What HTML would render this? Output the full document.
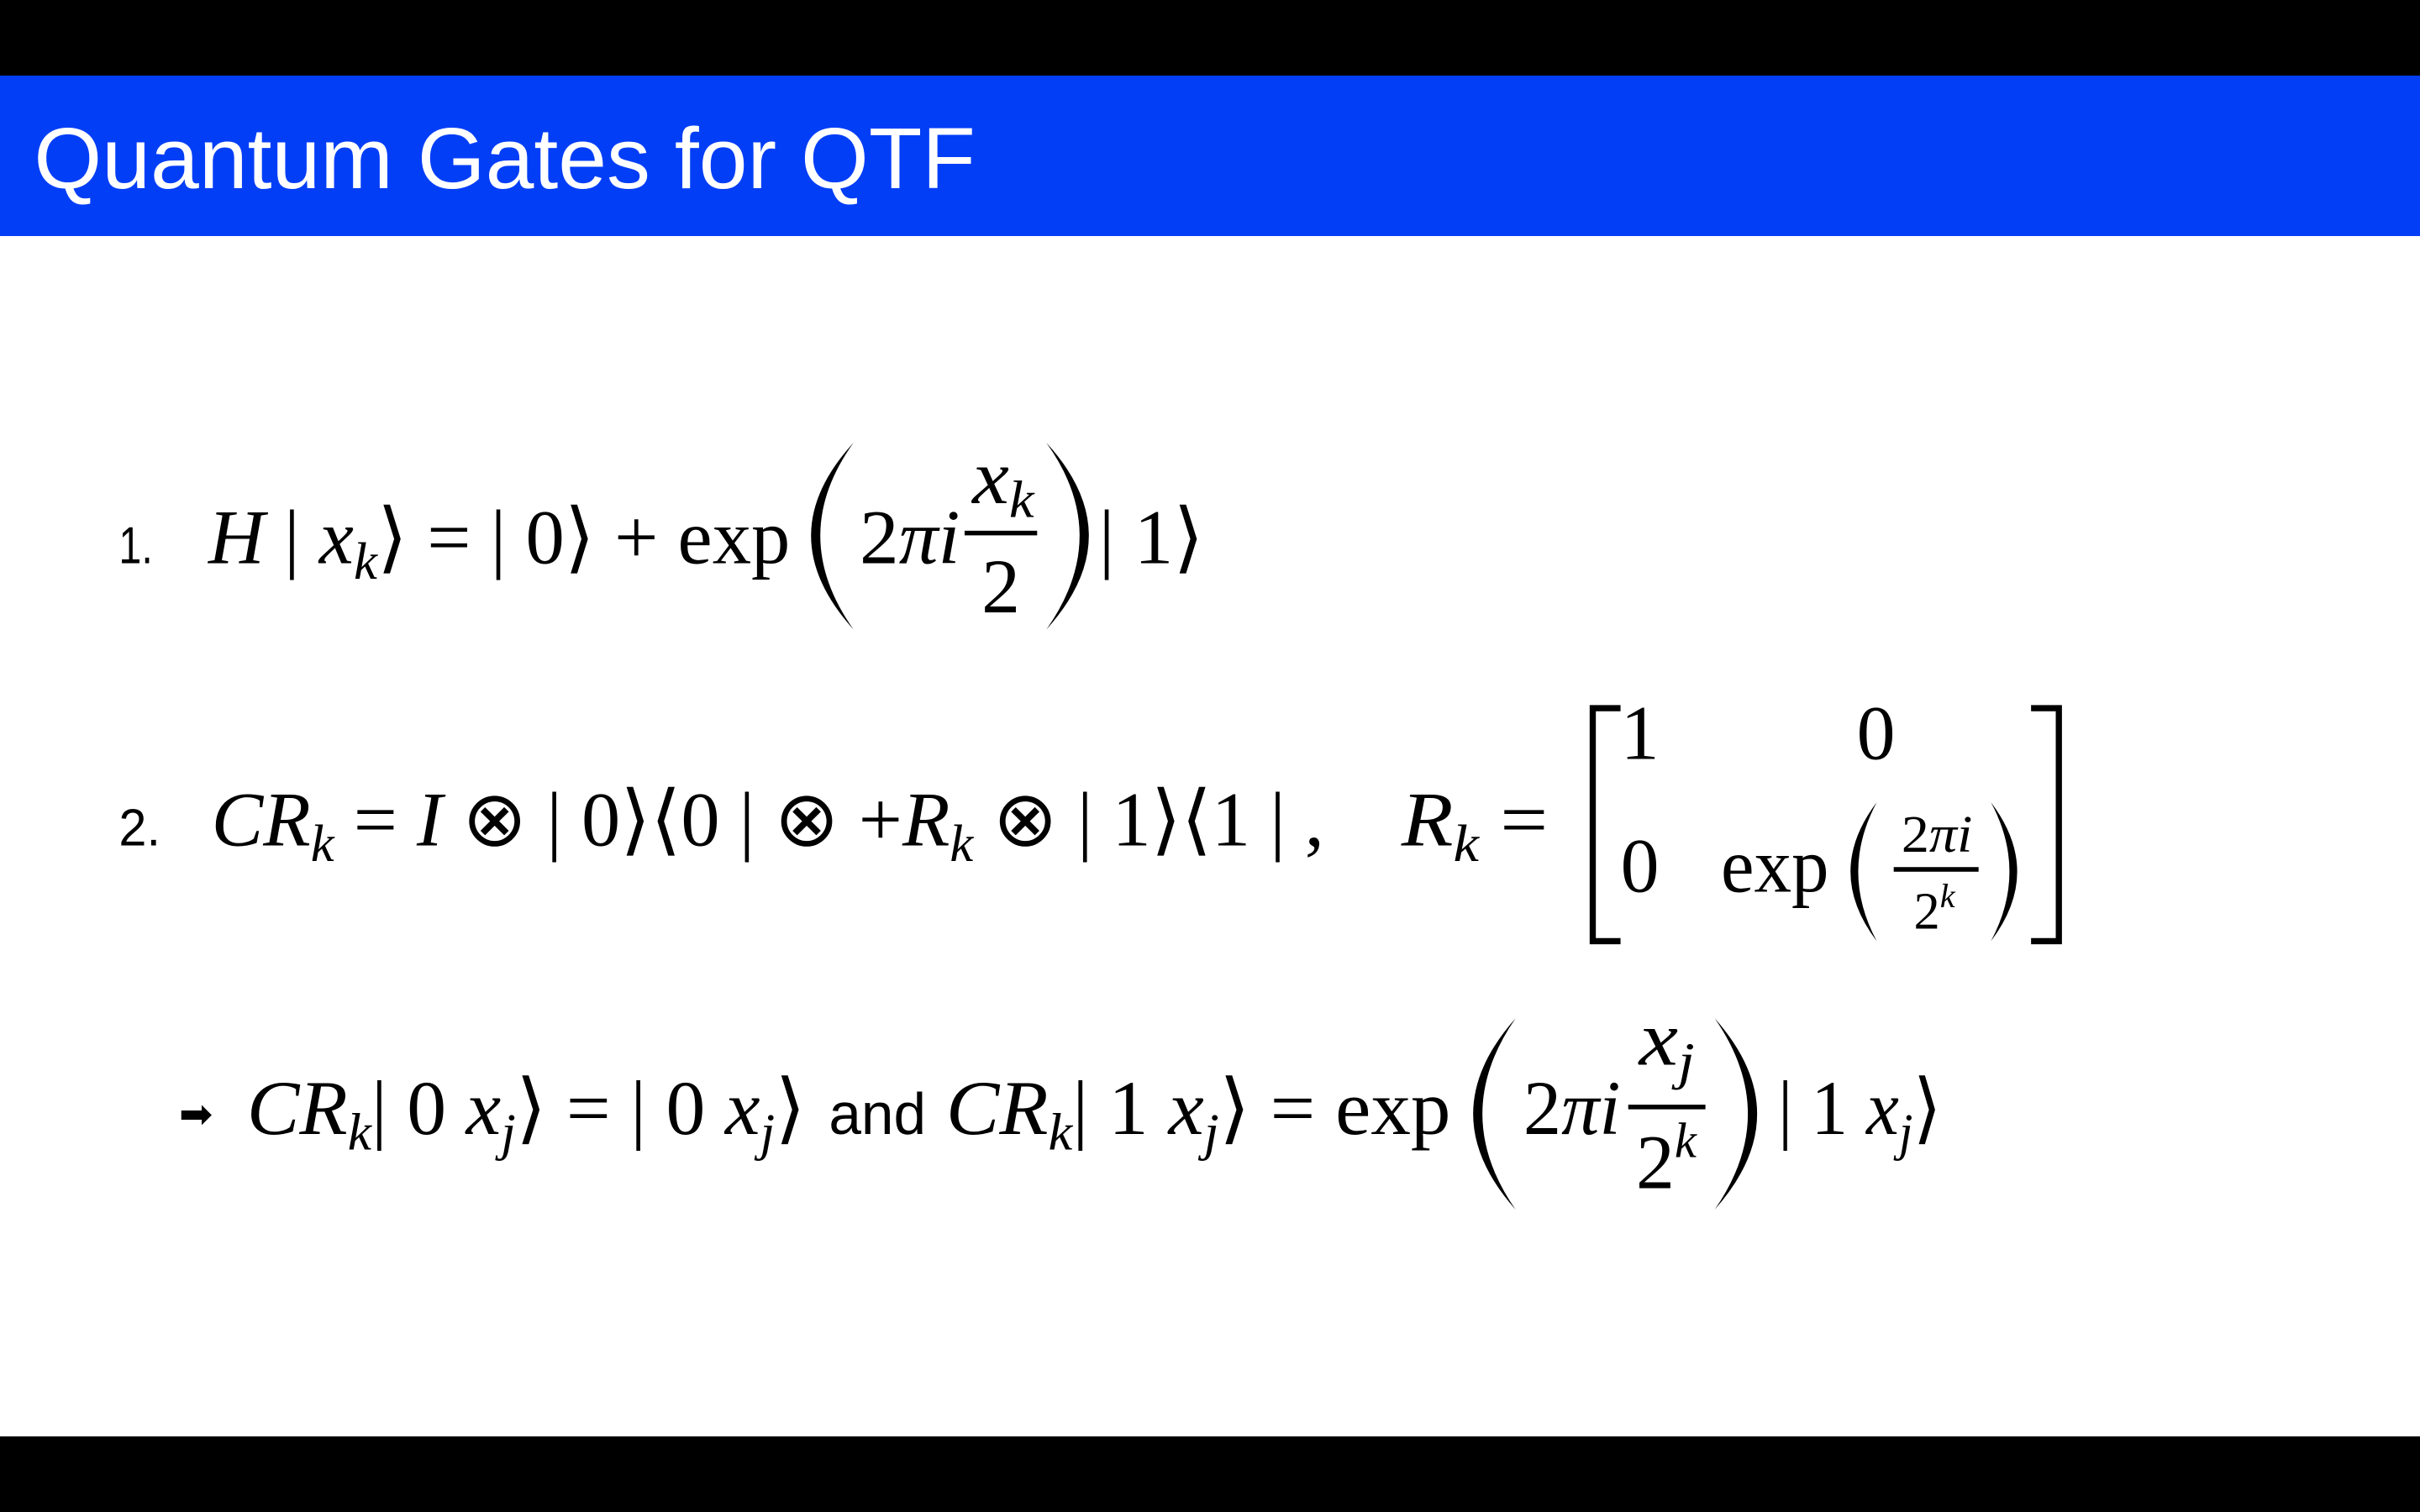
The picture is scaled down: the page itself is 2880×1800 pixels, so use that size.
<!DOCTYPE html>
<html><head><meta charset="utf-8"><style>
html,body{margin:0;padding:0;background:#fff;}
svg{display:block;}
.m{font-family:"Liberation Serif",serif;font-size:50px;fill:#000;}
.s{font-family:"Liberation Sans",sans-serif;fill:#000;}
.i{font-style:italic;}
</style></head><body>
<svg width="2880" height="1800" viewBox="0 0 1568 980" xmlns="http://www.w3.org/2000/svg">
<rect x="0" y="0" width="1568" height="49" fill="#000"/>
<rect x="0" y="49" width="1568" height="104" fill="#033ef7"/>
<rect x="0" y="931" width="1568" height="49" fill="#000"/>
<text x="22" y="122" class="s" style="font-size:56px;fill:#fff" textLength="610" lengthAdjust="spacingAndGlyphs">Quantum Gates for QTF</text>

<!-- line 1 -->
<text x="77" y="365" class="s" style="font-size:34px" textLength="22" lengthAdjust="spacingAndGlyphs">1.</text>
<text x="135" y="365" class="m" textLength="377" lengthAdjust="spacingAndGlyphs"><tspan class="i">H</tspan> | <tspan class="i">x</tspan><tspan class="i" font-size="34" dy="10">k</tspan><tspan dy="-10">⟩ = | 0⟩ + exp</tspan></text>
<path d="M553,287 Q498,347 553,408 Q510,347 553,287 Z" fill="#000"/>
<text x="557" y="365" class="m" textLength="65" lengthAdjust="spacingAndGlyphs">2<tspan class="i">πi</tspan></text>
<text x="630" y="326" class="m i" textLength="40" lengthAdjust="spacingAndGlyphs">x<tspan font-size="34" dy="9">k</tspan></text>
<rect x="625" y="344" width="47" height="3" fill="#000"/>
<text x="636" y="397" class="m">2</text>
<path d="M678,287 Q733,347 678,408 Q721,347 678,287 Z" fill="#000"/>
<text x="712" y="365" class="m" textLength="68" lengthAdjust="spacingAndGlyphs">| 1⟩</text>

<!-- line 2 -->
<text x="77" y="548" class="s" style="font-size:34px" textLength="27" lengthAdjust="spacingAndGlyphs">2.</text>
<text x="137" y="548" class="m" textLength="721" lengthAdjust="spacingAndGlyphs"><tspan class="i">CR</tspan><tspan class="i" font-size="34" dy="10">k</tspan><tspan dy="-10"> = </tspan><tspan class="i">I</tspan> ⊗ | 0⟩⟨0 | ⊗ +<tspan class="i">R</tspan><tspan class="i" font-size="34" dy="10">k</tspan><tspan dy="-10"> ⊗ | 1⟩⟨1 | ,</tspan></text>
<text x="908" y="548" class="m" textLength="95" lengthAdjust="spacingAndGlyphs"><tspan class="i">R</tspan><tspan class="i" font-size="34" dy="10">k</tspan><tspan dy="-10"> =</tspan></text>
<path d="M1050,459 L1032,459 L1032,610 L1050,610" fill="none" stroke="#000" stroke-width="4"/>
<path d="M1316,459 L1334,459 L1334,610 L1316,610" fill="none" stroke="#000" stroke-width="4"/>
<text x="1050" y="492" class="m">1</text>
<text x="1203" y="492" class="m">0</text>
<text x="1050" y="578" class="m">0</text>
<text x="1115" y="578" class="m" textLength="70" lengthAdjust="spacingAndGlyphs">exp</text>
<path d="M1216,520 Q1182,565 1216,610 Q1192,565 1216,520 Z" fill="#000"/>
<path d="M1290,520 Q1324,565 1290,610 Q1314,565 1290,520 Z" fill="#000"/>
<text x="1232" y="552" class="m" style="font-size:34px" textLength="46" lengthAdjust="spacingAndGlyphs">2<tspan class="i">πi</tspan></text>
<rect x="1227" y="562" width="55" height="3" fill="#000"/>
<text x="1240" y="602" class="m" style="font-size:34px">2<tspan class="i" font-size="22" dy="-14">k</tspan></text>

<!-- line 3 -->
<text x="116" y="731" class="s" style="font-size:26px">➡</text>
<text x="160" y="735" class="m" textLength="362" lengthAdjust="spacingAndGlyphs"><tspan class="i">CR</tspan><tspan class="i" font-size="34" dy="10">k</tspan><tspan dy="-10">| 0 </tspan><tspan class="i">x</tspan><tspan class="i" font-size="34" dy="10">j</tspan><tspan dy="-10">⟩ = | 0 </tspan><tspan class="i">x</tspan><tspan class="i" font-size="34" dy="10">j</tspan><tspan dy="-10">⟩</tspan></text>
<text x="537" y="735" class="s" style="font-size:38px" textLength="63" lengthAdjust="spacingAndGlyphs">and</text>
<text x="613" y="735" class="m" textLength="327" lengthAdjust="spacingAndGlyphs"><tspan class="i">CR</tspan><tspan class="i" font-size="34" dy="10">k</tspan><tspan dy="-10">| 1 </tspan><tspan class="i">x</tspan><tspan class="i" font-size="34" dy="10">j</tspan><tspan dy="-10">⟩ = exp</tspan></text>
<path d="M982,660 Q927,722 982,784 Q939,722 982,660 Z" fill="#000"/>
<text x="987" y="735" class="m" textLength="63" lengthAdjust="spacingAndGlyphs">2<tspan class="i">πi</tspan></text>
<text x="1062" y="690" class="m i" textLength="36" lengthAdjust="spacingAndGlyphs">x<tspan font-size="34" dy="9">j</tspan></text>
<rect x="1055" y="716" width="50" height="3" fill="#000"/>
<text x="1060" y="770" class="m">2<tspan class="i" font-size="32" dy="-20">k</tspan></text>
<path d="M1111,660 Q1166,722 1111,784 Q1154,722 1111,660 Z" fill="#000"/>
<text x="1152" y="735" class="m" textLength="106" lengthAdjust="spacingAndGlyphs">| 1 <tspan class="i">x</tspan><tspan class="i" font-size="34" dy="10">j</tspan><tspan dy="-10">⟩</tspan></text>
</svg>
</body></html>
